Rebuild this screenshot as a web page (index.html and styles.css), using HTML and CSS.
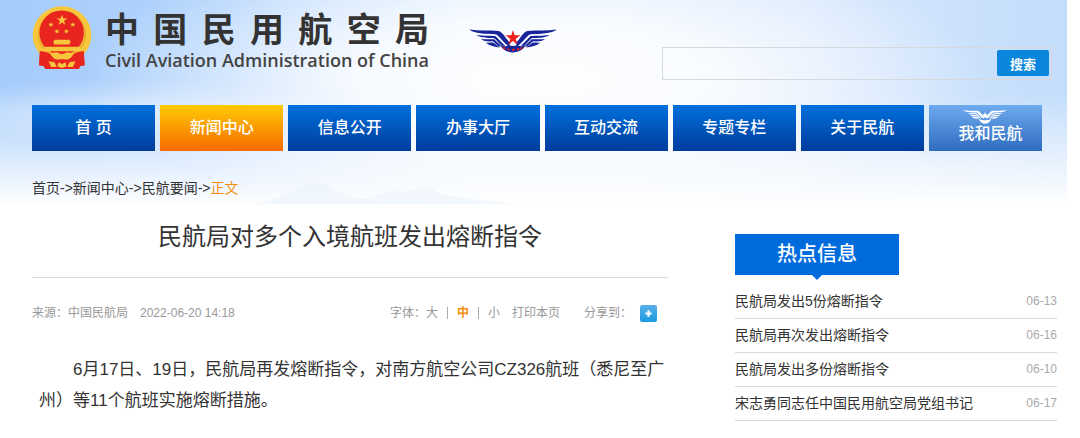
FILE: index.html
```html
<!DOCTYPE html>
<html lang="zh-CN">
<head>
  <meta charset="UTF-8" />
  <meta name="viewport" content="width=device-width, initial-scale=1.0"/>
  <title>民航局对多个入境航班发出熔断指令</title>
  <link rel="stylesheet" href="styles.css">
</head>
<body>
<div class="page">
  <header class="header">
    <svg class="hills" viewBox="0 0 260 24" aria-hidden="true">
      <path d="M0 24 C20 20 30 12 46 8 C54 2 66 2 74 9 C84 13 96 17 110 19 C128 12 140 8 150 13 C164 4 176 8 184 14 C204 18 230 20 260 24 Z"/>
    </svg>

    <div class="top">
      <a class="brand" href="#">
        <svg class="emblem" viewBox="0 0 176 190" aria-hidden="true">
          <path class="red" d="M23 132 L20 176 L34 178 L38 187 L72 187 L87 182 L102 187 L138 187 L142 178 L155 176 L152 132 Z"/>
          <ellipse class="gold" cx="88" cy="86" rx="87" ry="85"/>
          <ellipse class="ring" cx="88" cy="84" rx="72" ry="71"/>
          <circle class="red" cx="87" cy="79" r="66"/>
          <path class="gold" d="M88 26 l4 11 h12 l-10 7 4 12 -10 -7 -10 7 4 -12 -10 -7 h12 Z"/>
          <path class="gold" d="M55 48 l2 5 h6 l-5 4 2 5 -5 -3 -5 3 2 -5 -5 -4 h6 Z M120 48 l2 5 h6 l-5 4 2 5 -5 -3 -5 3 2 -5 -5 -4 h6 Z M73 68 l2 5 h6 l-5 4 2 5 -5 -3 -5 3 2 -5 -5 -4 h6 Z M101 68 l2 5 h6 l-5 4 2 5 -5 -3 -5 3 2 -5 -5 -4 h6 Z"/>
          <path class="gold" d="M66 100 H110 L115 108 H111 V114 H64 V108 H61 Z M35 121 H141 L147 134 H28 Z"/>
          <path class="red" d="M22 134 C40 134 54 140 62 152 L76 158 H100 L114 152 C122 140 136 134 153 134 L155 176 L142 178 L138 187 H38 L34 178 L20 176 Z"/>
          <path class="gold" d="M54 140 C60 158 76 164 88 154 C100 164 116 158 122 140 L104 137 L88 143 L72 137 Z"/>
          <path class="gold" d="M48 164 L66 167 L72 181 L56 181 Z M128 164 L110 167 L104 181 L120 181 Z M78 167 L88 172 L98 167 L102 179 L88 184 L74 179 Z"/>
        </svg>
        <span class="names">
          <span class="name-cn"><span>中</span><span>国</span><span>民</span><span>用</span><span>航</span><span>空</span><span>局</span></span>
          <span class="name-en">Civil Aviation Administration of China</span>
        </span>
        <svg class="wings" viewBox="0 0 262 70" aria-hidden="true">
          <g id="wing">
            <path d="M1 1 C30 5 60 3 88 5 C104 10 108 28 124 42 L117 50 C98 36 90 18 78 15 C50 14 16 14 1 1 Z"/>
            <path d="M22 17 C46 20 62 19 78 20 C88 28 96 40 108 49 L98 49 C88 42 82 31 74 26 C54 26 36 26 22 17 Z"/>
            <path d="M36 29 C52 31 64 29 75 30 C83 38 90 45 98 52 L88 51 C80 45 77 39 71 36 C57 37 44 36 36 29 Z"/>
            <path d="M50 40 C60 41 66 39 73 40 L92 54 C76 53 61 49 50 40 Z"/>
          </g>
          <use href="#wing" transform="matrix(-1 0 0 1 262 0)"/>
          <path d="M94 48 Q110 54 118 46 Q131 54 144 46 Q152 54 168 48 Q160 68 131 69 Q102 68 94 48 Z"/>
          <path class="star" d="M131 2 l5 16 h17 l-14 11 6 17 -14 -11 -14 11 6 -17 -14 -11 h17 Z"/>
          <path class="star" d="M101 53 l8 2 -2 5 -5 -2 Z M114 57 l7 1 -1 6 -6 -2 Z M128 58 h7 v6 h-7 Z M142 58 l7 -2 1 5 -7 3 Z M153 55 l7 -2 -2 5 -5 3 Z"/>
        </svg>
      </a>

      <form class="search" role="search">
        <input type="text" aria-label="搜索内容">
        <button type="button">搜索</button>
      </form>
    </div>

    <nav class="nav">
      <a href="#">首 页</a>
      <a href="#" class="active">新闻中心</a>
      <a href="#">信息公开</a>
      <a href="#">办事大厅</a>
      <a href="#">互动交流</a>
      <a href="#">专题专栏</a>
      <a href="#">关于民航</a>
      <a href="#" class="mine">
        <svg viewBox="0 0 262 84" aria-hidden="true">
          <use href="#wing"/>
          <use href="#wing" transform="matrix(-1 0 0 1 262 0)"/>
          <path d="M131 12 l6 15 h15 l-11 10 4 15 -14 -8 -14 8 4 -15 -11 -10 h15 Z M92 52 Q131 72 170 52 Q156 80 131 83 Q106 80 92 52 Z"/>
        </svg>
        <span>我和民航</span>
      </a>
    </nav>

    <div class="crumbs">
      <a href="#">首页</a>-&gt;<a href="#">新闻中心</a>-&gt;<a href="#">民航要闻</a>-&gt;<span class="here">正文</span>
    </div>
  </header>

  <div class="content">
    <main class="article">
      <h1>民航局对多个入境航班发出熔断指令</h1>
      <div class="meta">
        <span>来源：中国民航局</span>
        <span>2022-06-20 14:18</span>
        <div class="tools">
          <span>字体：</span>
          <button type="button">大</button>
          <i></i>
          <button type="button" class="on">中</button>
          <i></i>
          <button type="button">小</button>
          <button type="button" class="print">打印本页</button>
          <span class="share-label">分享到：</span>
          <button type="button" class="share" aria-label="分享">
            <svg viewBox="0 0 16 16" aria-hidden="true"><path d="M8 5 V11 M5 8 H11"/></svg>
          </button>
        </div>
      </div>
      <p>6月17日、19日，民航局再发熔断指令，对南方航空公司CZ326航班（悉尼至广州）等11个航班实施熔断措施。</p>
    </main>

    <aside class="hot">
      <h2>热点信息</h2>
      <ul>
        <li><a href="#">民航局发出5份熔断指令</a><time>06-13</time></li>
        <li><a href="#">民航局再次发出熔断指令</a><time>06-16</time></li>
        <li><a href="#">民航局发出多份熔断指令</a><time>06-10</time></li>
        <li><a href="#">宋志勇同志任中国民用航空局党组书记</a><time>06-17</time></li>
      </ul>
    </aside>
  </div>
</div>
</body>
</html>
```
FILE: styles.css
```css
* {
  box-sizing: border-box;
}
body {
  margin: 0;
  background: #fff;
  color: #333;
  font-family: "Liberation Sans", "Noto Sans CJK SC", sans-serif;
  font-size: 14px;
}
a {
  color: inherit;
  text-decoration: none;
}
button {
  padding: 0;
  border: 0;
  background: none;
  color: inherit;
  font: inherit;
  cursor: pointer;
}
.page {
  margin-right: 13px;
}

/* header with the sky behind it */
.header {
  position: relative;
  padding: 0 15px 8px 32px;
  background:
    linear-gradient(to bottom, rgba(255,255,255,0) 0, rgba(255,255,255,0) 45%, #fff 100%),
    radial-gradient(ellipse 42% 70% at 50% 38%, rgba(255,255,255,.95) 0, rgba(255,255,255,.85) 40%, rgba(255,255,255,0) 100%),
    radial-gradient(ellipse 22% 16% at 12% 54%, rgba(255,255,255,.45) 0, rgba(255,255,255,0) 100%),
    linear-gradient(to right, #a5ccfb 0, #b4d4fc 22%, #d8e9fe 45%, #d8e8fd 75%, #c3ddfb 100%);
}
.hills {
  position: absolute;
  left: 24%;
  bottom: 3px;
  width: 260px;
  height: 24px;
  fill: #e3eefb;
  opacity: .35;
}
.top {
  display: flex;
  justify-content: space-between;
  height: 105px;
}
.brand {
  display: flex;
  align-items: flex-start;
}
.emblem {
  width: 60px;
  height: 64px;
  margin-top: 6px;
}
.gold { fill: #f8c63d; }
.ring { fill: #eeb02f; }
.red { fill: #e8261f; }
.names {
  margin: 10px 40px 0 13px;
}
.name-cn {
  display: flex;
  justify-content: space-between;
  font-size: 34px;
  line-height: 40px;
  font-weight: bold;
}
.name-en {
  display: block;
  color: #444;
  font-family: "Open Sans", sans-serif;
  font-size: 18px;
  line-height: 20px;
  font-weight: 600;
}
.wings {
  width: 88px;
  height: 24px;
  margin-top: 29px;
  fill: #17259a;
}
.wings .star { fill: #f3211d; }

.search {
  display: flex;
  width: 390px;
  height: 33px;
  margin-top: 47px;
  padding: 2px;
  border: 1px solid #d5d8dc;
}
.search input {
  flex: 1;
  min-width: 0;
  padding: 0 8px;
  border: 0;
  background: none;
  font: inherit;
}
.search button {
  width: 52px;
  height: 26px;
  border-radius: 2px;
  background: #0a86dc;
  color: #fff;
  font-size: 13px;
  font-weight: bold;
}

.nav {
  display: flex;
  gap: 5px;
  margin-right: 10px;
}
.nav a {
  flex: 123 1 0;
  height: 46px;
  background: linear-gradient(#0070dc, #003c9c);
  color: #fff;
  font-size: 16px;
  line-height: 46px;
  font-weight: 500;
  text-align: center;
}
.nav a.active {
  background: linear-gradient(#ffcb05, #f56a00);
}
.nav a.mine {
  display: flex;
  flex: 113 1 0;
  flex-direction: column;
  align-items: center;
  padding-top: 5px;
  background: linear-gradient(#6daaee, #2f6cc0);
  line-height: 20px;
}
.mine svg {
  width: 44px;
  height: 14px;
  fill: #fff;
}
.mine span {
  padding-left: 10px;
}
.crumbs {
  position: relative;
  padding-top: 26px;
  line-height: 22px;
}
.crumbs .here { color: #f78f0e; }

/* article and side column */
.content {
  display: grid;
  grid-template-columns: minmax(0, 1fr) 322px;
  gap: 67px;
  padding: 0 10px 16px 32px;
}
.article h1 {
  margin: 0;
  padding: 10px 0 20px;
  border-bottom: 1px solid #d9d9d9;
  font-size: 24px;
  line-height: 40px;
  font-weight: normal;
  text-align: center;
}
.meta {
  display: flex;
  align-items: center;
  gap: 12px;
  padding-top: 24px;
  color: #999;
  font-size: 12px;
  line-height: 22px;
}
.tools {
  display: flex;
  align-items: center;
  margin-left: auto;
  padding-right: 11px;
}
.tools i {
  width: 1px;
  height: 12px;
  margin: 0 9px;
  background: #aaa;
}
.tools .on {
  color: #f78f0e;
  font-weight: bold;
}
.tools .print {
  margin: 0 24px 0 12px;
}
.tools .share {
  display: block;
  width: 17px;
  height: 17px;
  margin-left: 8px;
  border-radius: 2px;
  background: linear-gradient(#5bb0ea, #1b9ae2);
}
.share svg {
  display: block;
  fill: none;
  stroke: #fff;
  stroke-width: 2;
}
.article p {
  margin: 0;
  padding: 30px 0 0 7px;
  font-size: 17px;
  line-height: 31px;
  text-indent: 2em;
}

.hot h2 {
  position: relative;
  width: 164px;
  margin: 27px 0 10px;
  background: #006bdd;
  color: #fff;
  font-size: 20px;
  line-height: 41px;
  font-weight: 500;
  text-align: center;
}
.hot h2::after {
  content: "";
  position: absolute;
  top: 100%;
  left: 50%;
  margin-left: -5px;
  border: 5px solid transparent;
  border-top-color: #006bdd;
  border-bottom: 0;
}
.hot ul {
  margin: 0;
  padding: 0;
  list-style: none;
}
.hot li {
  display: flex;
  justify-content: space-between;
  border-bottom: 1px solid #d9d9d9;
  line-height: 33px;
}
.hot time {
  color: #aaa;
  font-size: 12px;
}
```
